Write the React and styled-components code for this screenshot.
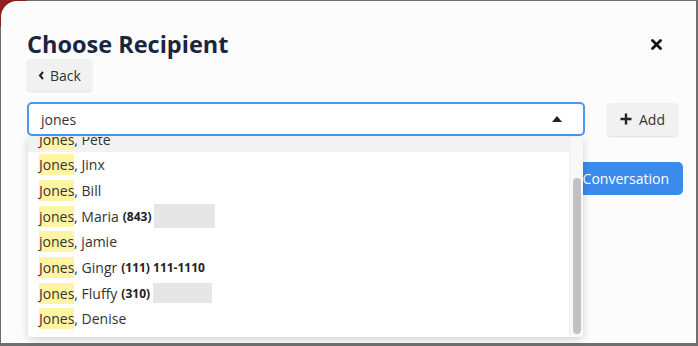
import React, { useEffect, useRef } from 'react';
import styled, { createGlobalStyle } from 'styled-components';

const GlobalStyle = createGlobalStyle`
  html, body {
    margin: 0;
    padding: 0;
  }
  body {
    width: 698px;
    height: 346px;
    overflow: hidden;
    background: radial-gradient(circle at 0 0, #8e1f1f 26px, transparent 27px), #6f6f6f;
    font-family: "Open Sans", "Liberation Sans", sans-serif;
  }
`;

const Modal = styled.div`
  box-sizing: border-box;
  margin: 1px 2px 0 1px;
  height: 342px;
  background: #fcfcfc;
  border-top-left-radius: 16px;
  padding: 29px 13px 0 26px;
  color: #333;
`;

const Header = styled.div`
  display: flex;
  align-items: center;
  justify-content: space-between;
  padding-right: 21px;
`;

const Title = styled.h2`
  margin: 0;
  font-size: 23.5px;
  line-height: 1.2;
  font-weight: 700;
  color: #1b2440;
`;

const Close = styled.button`
  border: 0;
  background: none;
  padding: 0;
  width: 11px;
  height: 11px;
  display: flex;
  cursor: pointer;
`;

const GreyButton = styled.button`
  display: inline-flex;
  align-items: center;
  gap: ${p => p.$gap || 5}px;
  height: ${p => p.$h || 32}px;
  padding: 0 ${p => p.$px || 12}px;
  border: 0;
  border-radius: 4px;
  background: #f1f1f1;
  box-shadow: 0 1px 2px rgba(0, 0, 0, 0.12);
  font-family: inherit;
  font-size: 14px;
  color: #333;
  cursor: pointer;
`;

const BackRow = styled.div`
  margin-top: 1px;
`;

const SearchRow = styled.div`
  display: flex;
  align-items: center;
  gap: 22px;
  margin-top: 11px;
  padding-right: 5px;
`;

const SelectWrap = styled.div`
  position: relative;
  flex: 1;
`;

const SelectBox = styled.div`
  box-sizing: border-box;
  height: 34px;
  display: flex;
  align-items: center;
  justify-content: space-between;
  padding: 0 21px 0 12px;
  border: 2px solid #4b97f2;
  border-radius: 5px;
  background: #fff;
  font-size: 14px;
  color: #333;
`;

const Menu = styled.div`
  position: absolute;
  top: 35px;
  left: 1px;
  right: 2px;
  height: 200px;
  background: #fff;
  box-shadow: 0 2px 8px rgba(0, 0, 0, 0.18);
  border-radius: 0 0 4px 4px;
  z-index: 2;
`;

const MenuScroll = styled.div`
  height: 100%;
  margin-right: 14px;
  overflow: hidden;
`;

const ScrollTrack = styled.div`
  position: absolute;
  top: 0;
  right: 0;
  bottom: 0;
  width: 13px;
  background: #f8f8f8;
  border-left: 1px solid #ededed;
  border-bottom-right-radius: 4px;
`;

const ScrollThumb = styled.div`
  position: absolute;
  left: 3px;
  right: 2px;
  top: 41px;
  bottom: 3px;
  background: #c1c1c1;
  border-radius: 4px;
`;

const MenuList = styled.div`
  padding: 4px 0 5px;
`;

const Option = styled.div`
  box-sizing: border-box;
  height: 25.67px;
  display: flex;
  align-items: center;
  padding: 0 11px;
  font-size: 14px;
  color: #333;
  white-space: nowrap;
  background: ${p => (p.$active ? '#f2f2f2' : 'transparent')};
`;

const Mark = styled.span`
  background: #fff4a3;
  padding: 1px 0;
`;

const Phone = styled.b`
  font-size: 12px;
  font-weight: 700;
  color: #222;
  margin-left: 4px;
`;

const Redacted = styled.span`
  display: inline-block;
  width: ${p => p.$w}px;
  height: ${p => p.$h}px;
  background: #e6e6e6;
  margin-left: 3px;
`;

const Footer = styled.div`
  display: flex;
  justify-content: flex-end;
  margin-top: 26px;
`;

const PrimaryButton = styled.button`
  height: 33px;
  padding: 0 14px;
  border: 0;
  border-radius: 5px;
  background: #3b8bec;
  color: #fff;
  font-family: inherit;
  font-size: 14px;
  cursor: pointer;
`;

const people = [
  { last: 'Jones', first: 'Ann' },
  { last: 'jones', first: 'Tom' },
  { last: 'Jones', first: 'Pete', active: true },
  { last: 'Jones', first: 'Jinx' },
  { last: 'Jones', first: 'Bill' },
  { last: 'jones', first: 'Maria', phone: '(843)', hidden: [61, 24] },
  { last: 'jones', first: 'jamie' },
  { last: 'Jones', first: 'Gingr', phone: '(111) 111-1110' },
  { last: 'Jones', first: 'Fluffy', phone: '(310)', hidden: [59, 20] },
  { last: 'Jones', first: 'Denise' },
];

const App = () => {
  const menuRef = useRef(null);

  useEffect(() => {
    if (menuRef.current) menuRef.current.scrollTop = menuRef.current.scrollHeight;
  }, []);

  return (
    <>
      <GlobalStyle />
      <Modal>
        <Header>
          <Title>Choose Recipient</Title>
          <Close aria-label="Close">
            <svg width="11" height="11" viewBox="0 0 11 11">
              <path d="M1.5 1.5 L9.5 9.5 M9.5 1.5 L1.5 9.5" stroke="#111" strokeWidth="2.8" strokeLinecap="round" />
            </svg>
          </Close>
        </Header>
        <BackRow>
          <GreyButton $px={11} $gap={5}>
            <svg width="7" height="9" viewBox="0 0 7 9">
              <path d="M5 1 L2 4.5 L5 8" fill="none" stroke="#222" strokeWidth="2" />
            </svg>
            Back
          </GreyButton>
        </BackRow>
        <SearchRow>
          <SelectWrap>
            <SelectBox>
              <span>jones</span>
              <svg width="10" height="6" viewBox="0 0 10 6">
                <path d="M0 6 L5 0 L10 6 Z" fill="#222" />
              </svg>
            </SelectBox>
            <Menu>
              <MenuScroll ref={menuRef}>
                <MenuList>
                  {people.map((p, i) => (
                    <Option key={i} $active={p.active}>
                      <Mark>{p.last}</Mark>, {p.first}
                      {p.phone && <Phone>{p.phone}</Phone>}
                      {p.hidden && <Redacted $w={p.hidden[0]} $h={p.hidden[1]} />}
                    </Option>
                  ))}
                </MenuList>
              </MenuScroll>
              <ScrollTrack>
                <ScrollThumb />
              </ScrollTrack>
            </Menu>
          </SelectWrap>
          <GreyButton $h={33} $px={13} $gap={7}>
            <svg width="12" height="12" viewBox="0 0 12 12">
              <path d="M6 0.5 V11.5 M0.5 6 H11.5" stroke="#222" strokeWidth="2.4" />
            </svg>
            Add
          </GreyButton>
        </SearchRow>
        <Footer>
          <PrimaryButton>Start Conversation</PrimaryButton>
        </Footer>
      </Modal>
    </>
  );
};

export default App;
